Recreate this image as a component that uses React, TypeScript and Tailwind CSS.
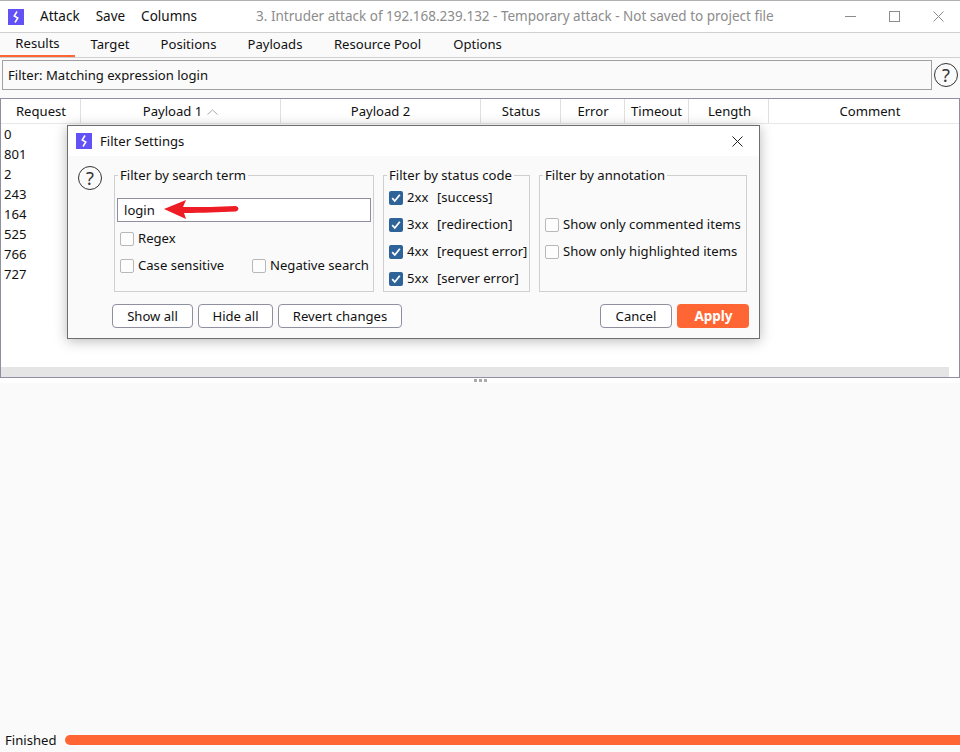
const F = "font-['Noto_Sans',sans-serif]";

function Logo({ s = 16 }: { s?: number }) {
  return (
    <svg width={s} height={s} viewBox="0 0 16 16" className="shrink-0">
      <rect width="16" height="16" fill="#6252f5" />
      <path d="M9 2.5 L6.2 7 L9.8 9 L7 13.5" fill="none" stroke="#fff" strokeWidth="1.5" />
    </svg>
  );
}

function Help({ s }: { s: number }) {
  return (
    <div
      className="flex shrink-0 items-center justify-center rounded-full border-[1.5px] border-[#333] text-[#333]"
      style={{ width: s, height: s, fontSize: s * 0.76, lineHeight: 1 }}
    >
      ?
    </div>
  );
}

function Check({ on = false }: { on?: boolean }) {
  if (on)
    return (
      <svg width="14" height="14" viewBox="0 0 14 14" className="shrink-0">
        <rect width="14" height="14" rx="2" fill="#2d6399" />
        <path d="M3.2 7.2 L5.8 10 L10.8 3.8" fill="none" stroke="#fff" strokeWidth="1.8" />
      </svg>
    );
  return <div className="h-[14px] w-[14px] shrink-0 rounded-[2px] border border-[#b8b8b8] bg-[#fdfdfd]" />;
}

function Opt({ label, code, on, className = "" }: { label: string; code?: string; on?: boolean; className?: string }) {
  return (
    <div className={`flex items-center gap-[4px] whitespace-pre ${className}`}>
      <Check on={on} />
      {code && <span className="w-[26px]">{code}</span>}
      <span>{label}</span>
    </div>
  );
}

function Btn({ label, w }: { label: string; w: string }) {
  return (
    <button className={`h-[24px] ${w} rounded-[4px] border border-[#8f8f9f] bg-white pt-[1px] text-[13.1px] text-[#111]`}>{label}</button>
  );
}

const cols: [string, string][] = [
  ["Request", "w-[80px] pl-[1px]"],
  ["Payload 1", "w-[200px]"],
  ["Payload 2", "w-[200px]"],
  ["Status", "w-[80px] pl-[1px]"],
  ["Error", "w-[64px] pl-[1px]"],
  ["Timeout", "w-[64px]"],
  ["Length", "w-[80px] pl-[2px]"],
  ["Comment", "flex-1 pl-[12px]"],
];

function Group({ title, className, children }: { title: string; className: string; children: React.ReactNode }) {
  return (
    <fieldset className={`h-[125px] border border-[#cfcfcf] ${className}`}>
      <legend className="ml-[3px] px-[2px] text-[13.1px] leading-[16px]">{title}</legend>
      {children}
    </fieldset>
  );
}

export default function App() {
  return (
    <div className={`${F} relative flex h-[752px] w-[960px] flex-col overflow-hidden bg-[#fafafa] text-[13.1px] text-[#111]`}>
      <div className="flex h-[33px] shrink-0 items-center border-y border-t-[#b0b0b0] border-b-[#d0d0d0] bg-white text-[13.5px]">
        <div className="ml-[8px]"><Logo /></div>
        <div className="ml-[16px] flex gap-[16px]">
          <span>Attack</span>
          <span>Save</span>
          <span>Columns</span>
        </div>
        <div className="ml-[59px] flex-1 text-[#8c8c8c]">3. Intruder attack of 192.168.239.132 - Temporary attack - Not saved to project file</div>
        <div className="flex items-center gap-[33px] pr-[16px]">
          <svg width="11" height="11" viewBox="0 0 11 11"><path d="M0 5.5H11" stroke="#8c8c8c" /></svg>
          <svg width="11" height="11" viewBox="0 0 11 11"><rect x=".5" y=".5" width="10" height="10" fill="none" stroke="#8c8c8c" /></svg>
          <svg width="11" height="11" viewBox="0 0 11 11"><path d="M.5.5 10.5 10.5M10.5.5.5 10.5" stroke="#8c8c8c" /></svg>
        </div>
      </div>

      <div className="flex h-[25px] shrink-0 items-stretch border-b border-[#d0d0d0]">
        {[
          ["Results", "w-[75px] border-b-2 border-[#ff6633]"],
          ["Target", "w-[70px]"],
          ["Positions", "w-[87px]"],
          ["Payloads", "w-[86px]"],
          ["Resource Pool", "w-[119px]"],
          ["Options", "w-[81px]"],
        ].map(([t, c]) => (
          <div key={t} className={`flex items-center justify-center ${c}`}>{t}</div>
        ))}
      </div>

      <div className="mt-[2px] flex shrink-0 items-center pl-[2px] pr-[2px]">
        <div className="flex h-[30px] flex-1 items-center border border-[#a0a0a0] bg-[#fafafa] pl-[5px] pt-[1px]">Filter: Matching expression login</div>
        <div className="ml-[2px]"><Help s={24} /></div>
      </div>

      <div className="mt-[8px] flex h-[280px] shrink-0 flex-col border border-[#8f8f9f] bg-white">
        <div className="flex h-[25px] shrink-0 border-b border-[#e8e8e8]">
          {cols.map(([t, w]) => (
            <div key={t} className={`flex items-center justify-center gap-[5px] border-r border-[#e0e0e0] pt-[1px] last:border-r-0 ${w}`}>
              {t}
              {t === "Payload 1" && (
                <svg width="11" height="6" viewBox="0 0 11 6"><path d="M.5 5.5 5.5 1 10.5 5.5" fill="none" stroke="#aaa" /></svg>
              )}
            </div>
          ))}
        </div>
        <div className="flex-1 pl-[3px]">
          {["0", "801", "2", "243", "164", "525", "766", "727"].map((r) => (
            <div key={r} className="h-[20px] leading-[20px]">{r}</div>
          ))}
        </div>
        <div className="mr-[10px] h-[10px] shrink-0 bg-[#e5e5e5]" />
      </div>

      <div className="flex h-[5px] shrink-0 items-center justify-center gap-[2px] bg-white">
        <i className="h-[3px] w-[3px] bg-[#aaa]" />
        <i className="h-[3px] w-[3px] bg-[#aaa]" />
        <i className="h-[3px] w-[3px] bg-[#aaa]" />
      </div>

      <div className="flex-1" />

      <div className="flex h-[24px] shrink-0 items-center pl-[5px]">
        <span className="w-[60px] pt-[1px]">Finished</span>
        <div className="h-[10px] flex-1 rounded-l-[5px] bg-[#ff6633]" />
      </div>

      <div className="absolute left-[67px] top-[125px] flex h-[214px] w-[693px] flex-col border border-[#6e6e6e] bg-[#fafafa] shadow-[0_2px_12px_rgba(0,0,0,0.28)]">
        <div className="flex h-[30px] shrink-0 items-center bg-white pl-[8px]">
          <Logo />
          <span className="ml-[8px] flex-1 pt-[1px]">Filter Settings</span>
          <svg width="11" height="11" viewBox="0 0 11 11" className="mr-[16px]"><path d="M.5.5 10.5 10.5M10.5.5.5 10.5" stroke="#222" /></svg>
        </div>
        <div className="flex pl-[10px] pt-[11px]">
          <div className="mt-[-1px]"><Help s={24} /></div>
          <div className="ml-[12px] flex gap-[9px]">
            <Group title="Filter by search term" className="w-[260px]">
              <div className="relative ml-[2px] mt-[15px] flex h-[24px] w-[254px] items-center border border-[#8f8f9f] bg-white pl-[6px] pt-[1px]">
                login
                <svg width="77" height="21" viewBox="0 0 77 21" className="absolute left-[45px] top-0">
                  <path d="M1 10 L23 1 L20 8 C40 8 55 8 73 7 Q78 9.5 73 12.5 C55 13 40 14 21 14 L23 20 Z" fill="#ee1c25" />
                </svg>
              </div>
              <Opt label="Regex" className="ml-[5px] mt-[7px] h-[20px]" />
              <div className="ml-[5px] mt-[7px] flex h-[20px]">
                <Opt label="Case sensitive" className="w-[132px]" />
                <Opt label="Negative search" />
              </div>
            </Group>
            <Group title="Filter by status code" className="w-[147px]">
              <div className="ml-[5px] flex flex-col gap-[7px] pt-[5px]">
                <Opt on code="2xx" label="[success]" className="h-[20px]" />
                <Opt on code="3xx" label="[redirection]" className="h-[20px]" />
                <Opt on code="4xx" label="[request error]" className="h-[20px]" />
                <Opt on code="5xx" label="[server error]" className="h-[20px]" />
              </div>
            </Group>
            <Group title="Filter by annotation" className="w-[208px]">
              <div className="ml-[5px] flex flex-col gap-[7px] pt-[32px]">
                <Opt label="Show only commented items" className="h-[20px]" />
                <Opt label="Show only highlighted items" className="h-[20px]" />
              </div>
            </Group>
          </div>
        </div>
        <div className="mt-[12px] flex pl-[44px] pr-[10px]">
          <div className="flex gap-[5px]">
            <Btn label="Show all" w="w-[81px]" />
            <Btn label="Hide all" w="w-[75px]" />
            <Btn label="Revert changes" w="w-[124px]" />
          </div>
          <div className="ml-auto flex gap-[5px]">
            <Btn label="Cancel" w="w-[72px]" />
            <button className="h-[24px] w-[72px] rounded-[4px] bg-[#ff6633] pl-[1px] pt-[1px] text-[13.5px] font-bold text-white">Apply</button>
          </div>
        </div>
      </div>
    </div>
  );
}
